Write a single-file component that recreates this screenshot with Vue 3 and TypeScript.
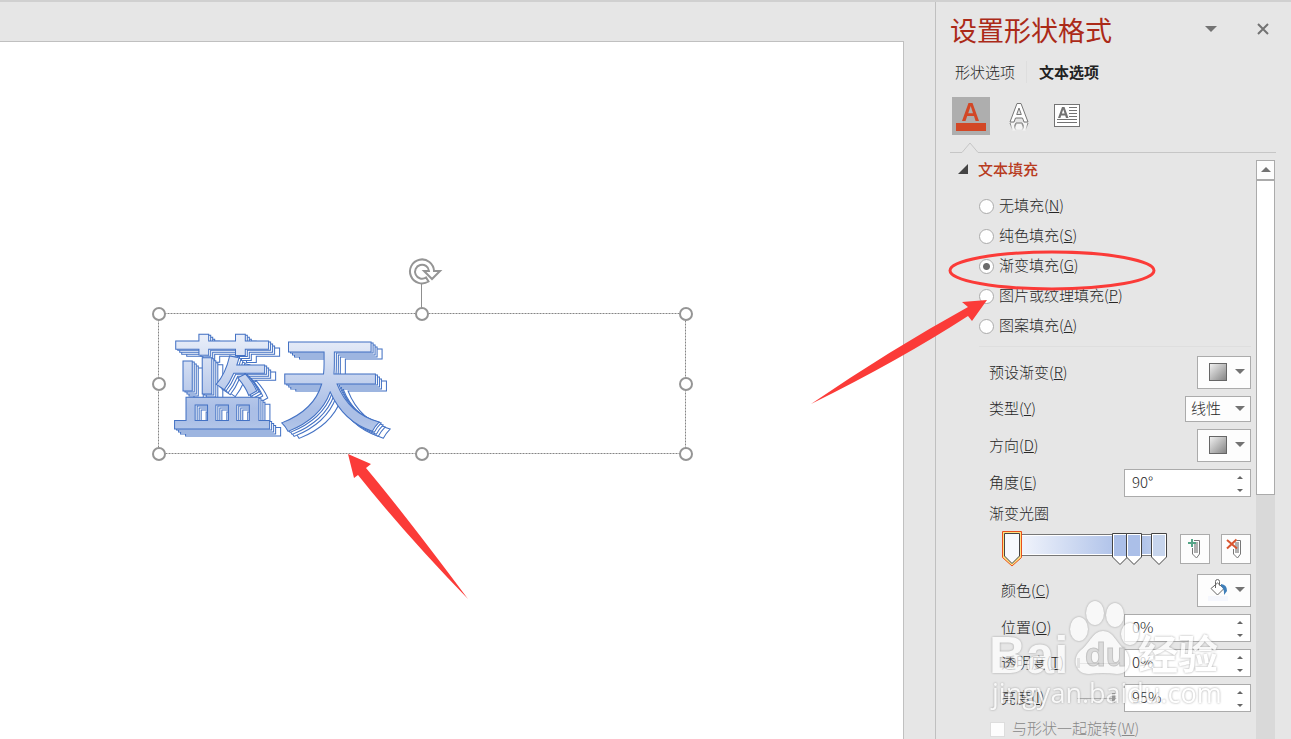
<script setup lang="ts">
import { ref } from 'vue'

interface FillOption { value: string; label: string; key: string }
interface Stop { x: number; color: string }

const fills: FillOption[] = [
  { value: 'none', label: '无填充', key: 'N' },
  { value: 'solid', label: '纯色填充', key: 'S' },
  { value: 'gradient', label: '渐变填充', key: 'G' },
  { value: 'picture', label: '图片或纹理填充', key: 'P' },
  { value: 'pattern', label: '图案填充', key: 'A' },
]
const stops: Stop[] = [
  { x: 110, color: '#abbfe8' },
  { x: 124, color: '#abbfe8' },
  { x: 149, color: '#c7d5ed' },
]
const handles: [number, number][] = [
  [159, 314], [422, 314], [686, 314], [159, 384],
  [686, 384], [159, 454], [422, 454], [686, 454],
]

const fill = ref('gradient')
const kind = ref('线性')
const angle = ref('90°')
const position = ref('0%')
const transparency = ref('0%')
const brightness = ref('95%')
const transparencyLevel = ref(0)
const brightnessLevel = ref(95)
const rotateWithShape = ref(false)
</script>

<template>
  <div class="app">
    <main class="workspace">
      <div class="slide">
        <svg class="canvas" viewBox="0 42 903 697" width="903" height="697">
          <defs>
            <linearGradient id="sky" gradientUnits="userSpaceOnUse" x1="0" y1="336" x2="0" y2="434">
              <stop offset="0" stop-color="#e9eef9" />
              <stop offset="0.74" stop-color="#abbfe6" />
              <stop offset="0.85" stop-color="#abbfe6" />
              <stop offset="1" stop-color="#b6c9ea" />
            </linearGradient>
            <text id="word" x="170 278" y="423" class="word">蓝天</text>
          </defs>
          <rect x="158.5" y="313.5" width="527" height="140" class="frame" />
          <path d="M421.5 283V308" stroke="#8f8f8f" />
          <circle v-for="([x, y], i) in handles" :key="i" :cx="x" :cy="y" r="6" class="handle" />
          <path d="M428.500 281.500A12 12 0 1 1 434 271H440L432 279L424 271H429A7 7 0 1 0 426 277.500Z" fill="none" stroke="#959595" stroke-width="2" />
          <g fill="#fff">
            <use href="#word" x="11" y="7" />
            <use href="#word" x="6" y="5" />
            <use href="#word" x="4" y="3" />
            <use href="#word" x="2" y="1" />
          </g>
          <use href="#word" fill="url(#sky)" />
          <path d="M348 454L371 464L366 468Q403 512 468 599Q405 534 358 475L354 478Z" fill="#fb3b38" />
        </svg>
      </div>
    </main>

    <aside class="panel">
      <header class="head">
        <h1>设置形状格式</h1>
        <button class="plain menu" aria-label="任务窗格选项">
          <svg width="12" height="6"><path d="M0 0H12L6 6Z" fill="#737373" /></svg>
        </button>
        <button class="plain" aria-label="关闭">
          <svg width="12" height="12"><path d="M1 1L11 11M11 1L1 11" stroke="#737373" stroke-width="2" /></svg>
        </button>
      </header>

      <nav class="tabs">
        <button class="plain tab">形状选项</button>
        <button class="plain tab active">文本选项</button>
      </nav>

      <div class="tools">
        <button class="tool on" aria-label="文本填充与轮廓">
          <svg width="38" height="38">
            <path d="M10 24L16.500 6H20.500L27 24H23.600L22 19H15.200L13.500 24ZM16.200 16.200H21L18.700 9Z" fill="#d24726" fill-rule="evenodd" />
            <rect x="4" y="26" width="30" height="8" fill="#d24726" />
          </svg>
        </button>
        <button class="tool" aria-label="文字效果">
          <svg width="38" height="38">
            <defs>
              <linearGradient id="fade" x2="0" y2="1">
                <stop offset="0" stop-color="#777" />
                <stop offset="1" stop-color="#777" stop-opacity="0" />
              </linearGradient>
            </defs>
            <path d="M10 25L17 6.500H21L28 25H24L22.500 21H15.500L14 25ZM16.700 17.500H21.300L19 11Z" fill="#fff" stroke="#777" fill-rule="evenodd" />
            <path d="M10 26L12.500 33.500H15.500L14.500 28.500L16 26H22L23.500 28.500L22.500 33.500H25.500L28 26M16 27L14.500 31L16.500 33H21.500L23.500 31L22 27" fill="#f6f6f6" stroke="url(#fade)" />
          </svg>
        </button>
        <button class="tool" aria-label="文本框">
          <svg width="38" height="38">
            <rect x="6.500" y="7.500" width="25" height="22" fill="#fff" stroke="#737373" />
            <path d="M10 21L14 10H16.500L20.500 21H18L17.200 18.500H13.200L12.400 21ZM13.900 16.500H16.600L15.200 12.500Z" fill="#737373" fill-rule="evenodd" />
            <path d="M21 10.500H29M21 13.500H29M21 16.500H29M21 19.500H29M9 22.500H29M9 25.500H29" stroke="#737373" />
          </svg>
        </button>
      </div>
      <svg class="rule" width="326" height="12"><path d="M0 10.500H12L20 1L28 10.500H326" fill="none" stroke="#c6c6c6" /></svg>

      <div class="body">
        <section class="content">
          <h2>
            <svg width="10" height="10"><path d="M10 0V10H0Z" fill="#444" /></svg>
            文本填充
          </h2>

          <div class="radios" role="radiogroup" aria-label="文本填充">
            <label v-for="f in fills" :key="f.value" class="radio">
              <input v-model="fill" type="radio" name="fill" :value="f.value">
              <span class="text">{{ f.label }}(<u>{{ f.key }}</u>)</span>
            </label>
          </div>

          <div class="fields">
            <div class="row">
              <label class="text" for="preset">预设渐变(<u>R</u>)</label>
              <button id="preset" class="box picker">
                <i class="swatch" />
                <svg width="10" height="5"><path d="M0 0H10L5 5Z" fill="#737373" /></svg>
              </button>
            </div>
            <div class="row">
              <label class="text" for="kind">类型(<u>Y</u>)</label>
              <div class="choice">
                <select id="kind" v-model="kind" class="box">
                  <option>线性</option>
                  <option>射线</option>
                </select>
                <svg width="10" height="5"><path d="M0 0H10L5 5Z" fill="#737373" /></svg>
              </div>
            </div>
            <div class="row">
              <label class="text" for="direction">方向(<u>D</u>)</label>
              <button id="direction" class="box picker">
                <i class="swatch" />
                <svg width="10" height="5"><path d="M0 0H10L5 5Z" fill="#737373" /></svg>
              </button>
            </div>
            <div class="row">
              <label class="text" for="angle">角度(<u>E</u>)</label>
              <div class="box spin">
                <input id="angle" v-model="angle" type="text">
                <span class="steps">
                  <button class="plain" aria-label="增大角度"><svg width="6" height="3"><path d="M0 3H6L3 0Z" fill="#666" /></svg></button>
                  <button class="plain" aria-label="减小角度"><svg width="6" height="3"><path d="M0 0H6L3 3Z" fill="#666" /></svg></button>
                </span>
              </div>
            </div>

            <div class="caption">渐变光圈</div>
            <div class="gradient">
              <div class="ramp">
                <div class="bar" />
                <button class="plain stop" aria-label="光圈 1">
                  <svg width="20" height="36">
                    <path d="M.500 .500H19.500V26.500L10 35L.500 26.500Z" fill="#ffdf80" stroke="#e8501c" />
                    <path d="M2.500 2.500H17.500V25L10 32.500L2.500 25Z" fill="#f7f9fd" stroke="#444" />
                  </svg>
                </button>
                <button v-for="(s, i) in stops" :key="s.x" class="plain stop low" :style="{ left: s.x + 'px' }" :aria-label="'光圈 ' + (i + 2)">
                  <svg width="16" height="33">
                    <path d="M.500 .500H15.500V24L8 31.500L.500 24Z" fill="#fff" stroke="#444" />
                    <path d="M2 2H14V23H2Z" :fill="s.color" />
                  </svg>
                </button>
              </div>
              <button class="box square" aria-label="添加渐变光圈">
                <svg width="28" height="28">
                  <path d="M13 5.500H18.500V19L15.500 23L11.500 19V13" fill="#fff" stroke="#777" />
                  <path d="M13 7H17V18H13Z" fill="#b0b0b0" />
                  <path d="M11 4V12M7 8H15" stroke="#55a587" stroke-width="2" />
                </svg>
              </button>
              <button class="box square" aria-label="删除渐变光圈">
                <svg width="28" height="28">
                  <path d="M15 5.500H18.500V19L15.500 23L11.500 19V14" fill="#fff" stroke="#777" />
                  <path d="M13 7H17V18H13Z" fill="#b0b0b0" />
                  <path d="M5 5L15 13.500M14.500 4.500L5 13.500" stroke="#d8552f" stroke-width="2" />
                </svg>
              </button>
            </div>

            <div class="row inner">
              <label class="text" for="color">颜色(<u>C</u>)</label>
              <button id="color" class="box picker">
                <svg width="20" height="22">
                  <path d="M9.500 4L16 9.500L9.500 16L3 9.500ZM7.500 9V2.500Q7.500 .500 9.500 .500Q11.500 .500 11.500 2.500V6.500" fill="#fff" stroke="#666" />
                  <path d="M13 5Q19 5.500 19 12L16 16Q16.500 10 13 7Z" fill="#3f7fba" />
                  <rect y="17" width="20" height="5" fill="#f5f7fd" />
                </svg>
                <svg width="10" height="5"><path d="M0 0H10L5 5Z" fill="#737373" /></svg>
              </button>
            </div>
            <div class="row inner">
              <label class="text" for="position">位置(<u>O</u>)</label>
              <div class="box spin">
                <input id="position" v-model="position" type="text">
                <span class="steps">
                  <button class="plain" aria-label="增大位置"><svg width="6" height="3"><path d="M0 3H6L3 0Z" fill="#666" /></svg></button>
                  <button class="plain" aria-label="减小位置"><svg width="6" height="3"><path d="M0 0H6L3 3Z" fill="#666" /></svg></button>
                </span>
              </div>
            </div>
            <div class="row inner">
              <label class="text" for="transparency">透明度(<u>T</u>)</label>
              <input v-model="transparencyLevel" class="level" type="range" aria-label="透明度">
              <div class="box spin">
                <input id="transparency" v-model="transparency" type="text">
                <span class="steps">
                  <button class="plain" aria-label="增大透明度"><svg width="6" height="3"><path d="M0 3H6L3 0Z" fill="#666" /></svg></button>
                  <button class="plain" aria-label="减小透明度"><svg width="6" height="3"><path d="M0 0H6L3 3Z" fill="#666" /></svg></button>
                </span>
              </div>
            </div>
            <div class="row inner">
              <label class="text" for="brightness">亮度(<u>I</u>)</label>
              <input v-model="brightnessLevel" class="level" type="range" aria-label="亮度">
              <div class="box spin">
                <input id="brightness" v-model="brightness" type="text">
                <span class="steps">
                  <button class="plain" aria-label="增大亮度"><svg width="6" height="3"><path d="M0 3H6L3 0Z" fill="#666" /></svg></button>
                  <button class="plain" aria-label="减小亮度"><svg width="6" height="3"><path d="M0 0H6L3 3Z" fill="#666" /></svg></button>
                </span>
              </div>
            </div>
            <label class="check">
              <input v-model="rotateWithShape" type="checkbox" disabled>
              <span class="text">与形状一起旋转(<u>W</u>)</span>
            </label>
          </div>
        </section>

        <div class="scroll">
          <button class="up" aria-label="向上滚动"><svg width="10" height="5"><path d="M0 5H10L5 0Z" fill="#737373" /></svg></button>
          <div class="thumb" />
        </div>
      </div>

      <svg class="marks" viewBox="936 0 355 739" width="355" height="739">
        <ellipse cx="1052" cy="270.500" rx="102" ry="18.500" fill="none" stroke="#fb3b38" stroke-width="3" />
        <path d="M987 300L962 302L968 307Q890 350 811 404Q900 360 968 316L972 321Z" fill="#fb3b38" />
        <g class="watermark">
          <text x="989" y="673" class="brand">Bai</text>
          <ellipse cx="1079" cy="629" rx="9" ry="12" />
          <ellipse cx="1095" cy="613" rx="9" ry="12" />
          <ellipse cx="1115" cy="615" rx="9" ry="12" />
          <ellipse cx="1130" cy="634" rx="9" ry="11" />
          <path d="M1103 631C1113 631 1116 642 1124 649C1133 657 1131 674 1117 674Q1103 672 1089 674C1074 674 1072 657 1081 650C1090 643 1093 631 1103 631Z" />
          <text x="1085" y="666" class="du">du</text>
          <text x="1138" y="669" class="exp">经验</text>
          <text x="992" y="703" class="url">jingyan.baidu.com</text>
        </g>
      </svg>
    </aside>
  </div>
</template>

<style>
body {
  background: #e6e6e6;
}
</style>

<style scoped>
.app {
  display: flex;
  box-sizing: border-box;
  height: 100vh;
  min-height: 600px;
  overflow: hidden;
  border-top: 2px solid #d0d0d0;
  background: #e6e6e6;
  color: #262626;
  font: 300 15px/20px "Noto Sans CJK SC", "Open Sans", sans-serif;
}
.app * {
  box-sizing: border-box;
}
button, input, select {
  margin: 0;
  font: inherit;
  color: inherit;
}
svg {
  display: block;
  flex: none;
}
.plain {
  display: flex;
  align-items: center;
  justify-content: center;
  padding: 0;
  border: 0;
  background: none;
}
.text {
  padding-bottom: 2px;
}
.workspace {
  display: flex;
  flex: 1;
  min-width: 0;
  padding: 39px 31px 0 0;
}
.slide {
  flex: 1;
  overflow: hidden;
  border: 1px solid #c0c0c0;
  border-width: 1px 1px 0 0;
  background: #fff;
}
.word {
  font: 500 104px "Noto Sans CJK SC", sans-serif;
  stroke: #4472c4;
  stroke-width: 1px;
}
.frame {
  fill: none;
  stroke: #858585;
  stroke-dasharray: 2 1;
}
.handle {
  fill: #fff;
  stroke: #959595;
  stroke-width: 2px;
}
.panel {
  position: relative;
  display: flex;
  flex: none;
  flex-direction: column;
  width: 356px;
  padding: 8px 15px 0 14px;
  border-left: 1px solid #c0c0c0;
}
.head {
  display: flex;
  align-items: center;
  gap: 40px;
  height: 40px;
  padding-right: 7px;
}
h1 {
  flex: 1;
  margin: 0;
  color: #ab2a18;
  font-size: 27px;
  font-weight: 400;
  line-height: 40px;
}
.head .plain {
  height: 38px;
  align-self: flex-start;
}
.tabs {
  display: flex;
  height: 47px;
  padding: 0 0 4px 5px;
  align-items: center;
}
.tab {
  height: 22px;
}
.tab.active {
  margin-left: 11px;
  padding-left: 12px;
  border-left: 1px solid #dedede;
  color: #222;
  font-weight: 700;
}
.tools {
  display: flex;
  gap: 10px;
  padding-left: 2px;
}
.tool {
  width: 38px;
  height: 38px;
  padding: 0;
  border: 0;
  background: none;
}
.tool.on {
  background: #aeaeae;
}
.rule {
  margin-top: 7px;
}
.body {
  display: flex;
  flex: 1;
  justify-content: space-between;
  min-height: 0;
  padding-top: 6px;
  padding-right: 1px;
}
.content {
  width: 301px;
}
h2 {
  display: flex;
  align-items: center;
  gap: 10px;
  height: 20px;
  margin: 0 0 11px 8px;
  padding-bottom: 2px;
  color: #b83b1d;
  font-size: 15px;
  font-weight: 500;
}
.radios {
  padding-bottom: 5px;
  margin-left: 29px;
  border-bottom: 1px solid #dedede;
}
.radio {
  display: flex;
  align-items: center;
  gap: 5px;
  height: 30px;
}
.radio input {
  width: 15px;
  height: 15px;
  border: 1px solid #ababab;
  border-radius: 50%;
  background: #fff;
  appearance: none;
}
.radio input:checked {
  background: radial-gradient(circle, #6c6c6c 3px, #fff 4px);
}
.fields {
  display: flex;
  flex-direction: column;
  gap: 7px;
  padding: 9px 0 0 39px;
}
.row {
  display: flex;
  align-items: center;
  justify-content: space-between;
}
.inner {
  padding-left: 12px;
}
.box {
  border: 1px solid #ababab;
  border-radius: 0;
  background: #fdfdfd;
}
.picker {
  display: flex;
  align-items: center;
  justify-content: space-between;
  width: 54px;
  height: 33px;
  padding: 0 5px 2px 10px;
}
.swatch {
  width: 18px;
  height: 18px;
  border: 1px solid #666;
  background: linear-gradient(135deg, #f0f0f0, #858585);
}
.picker .swatch {
  margin-left: 1px;
}
.choice {
  display: grid;
  align-items: center;
  justify-items: end;
}
.choice > * {
  grid-area: 1 / 1;
}
.choice svg {
  margin: 0 6px 2px 0;
  pointer-events: none;
}
.choice select {
  width: 66px;
  height: 26px;
  padding: 0 5px 2px;
  appearance: none;
}
.spin {
  display: flex;
  width: 127px;
  height: 28px;
  background: #fff;
}
.spin input {
  flex: 1;
  min-width: 0;
  padding: 0 0 2px 7px;
  border: 0;
  background: none;
}
.steps {
  display: flex;
  flex-direction: column;
  justify-content: space-between;
  width: 20px;
  padding: 3px 0 2px;
}
.steps .plain {
  height: 8px;
}
.caption {
  height: 20px;
  line-height: 18px;
}
.gradient {
  display: flex;
  align-items: center;
  gap: 11px;
  height: 36px;
  padding-left: 13px;
}
.ramp {
  position: relative;
  flex: 1;
  height: 36px;
}
.bar {
  height: 22px;
  margin: 3px 1px 0 10px;
  border: 1px solid #777;
  background: linear-gradient(90deg, #f6f8fd, #abbfe8 72%, #abbfe8 82%, #c7d5ed);
  box-shadow: inset 0 0 0 1px #fff;
}
.stop {
  position: absolute;
  top: 0;
  left: 0;
}
.low {
  top: 2px;
}
.square {
  width: 30px;
  height: 30px;
  padding: 0;
}
.ramp + .square {
  margin-left: 2px;
}
.level {
  width: 40px;
  height: 12px;
  margin-left: auto;
  margin-right: 7px;
  background: linear-gradient(#aaa, #aaa) center / 100% 1px no-repeat;
  appearance: none;
}
.level::-webkit-slider-thumb {
  width: 3px;
  height: 10px;
  background: #999;
  appearance: none;
}
.check {
  display: flex;
  align-items: center;
  gap: 7px;
  height: 20px;
  color: #888;
}
.check input {
  width: 15px;
  height: 15px;
  margin-left: 1px;
  border: 1px solid #ddd;
  background: #fdfdfd;
  appearance: none;
}
.scroll {
  width: 19px;
  background: #d9d9d9;
}
.up {
  display: flex;
  align-items: center;
  justify-content: center;
  width: 19px;
  height: 20px;
  padding: 0 0 2px;
  border: 1px solid #ababab;
  background: #fdfdfd;
}
.thumb {
  height: 315px;
  border: 1px solid #ababab;
  background: #fff;
}
.marks {
  position: absolute;
  top: -2px;
  left: 0;
  overflow: visible;
  pointer-events: none;
}
.watermark {
  fill: #fff;
  opacity: 0.72;
  filter: drop-shadow(0 0 1px #888);
}
.brand {
  font: 700 51px "Liberation Sans", sans-serif;
}
.du {
  fill: #d8d8d8;
  stroke: #b8b8b8;
  font: 700 34px "Liberation Sans", sans-serif;
}
.exp {
  font: 700 40px "Noto Sans CJK SC", sans-serif;
}
.url {
  font: 400 27px "Open Sans", sans-serif;
}
</style>
